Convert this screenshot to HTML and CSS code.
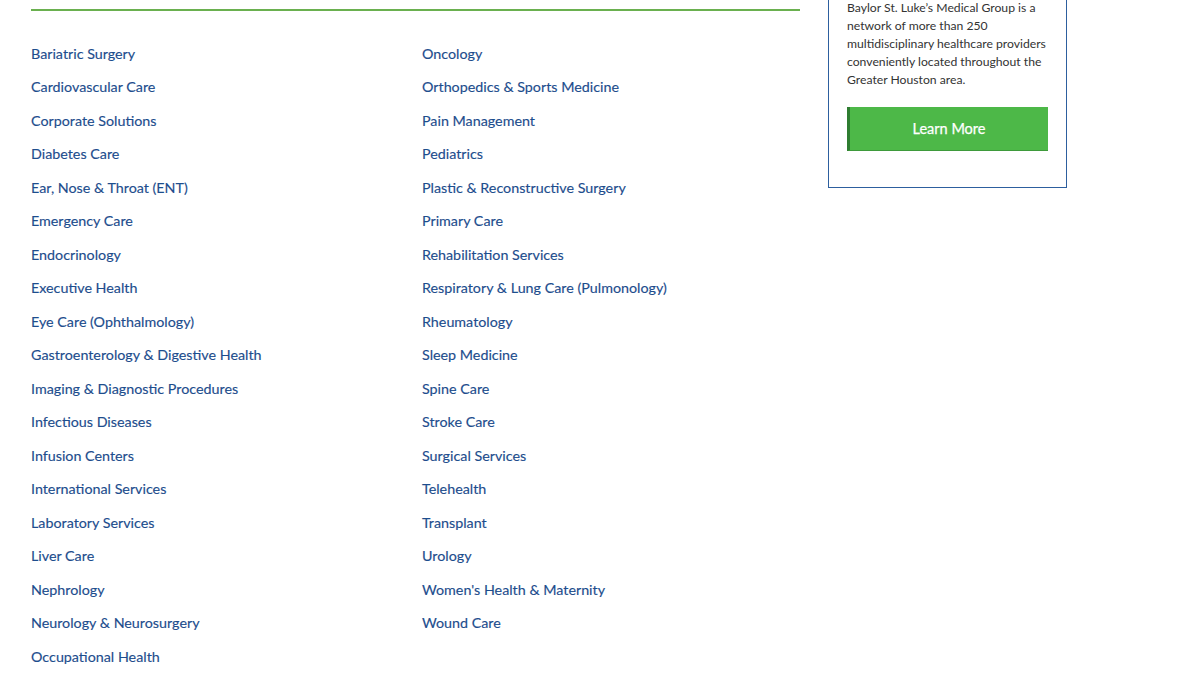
FILE: index.html
```html
<!DOCTYPE html>
<html>
<head>
<meta charset="utf-8">
<link rel="stylesheet" href="styles.css">
</head>
<body>
<div class="page">
  <main class="main">
    <ul class="links">
      <li><a href="#">Bariatric Surgery</a></li>
      <li><a href="#">Cardiovascular Care</a></li>
      <li><a href="#">Corporate Solutions</a></li>
      <li><a href="#">Diabetes Care</a></li>
      <li><a href="#">Ear, Nose &amp; Throat (ENT)</a></li>
      <li><a href="#">Emergency Care</a></li>
      <li><a href="#">Endocrinology</a></li>
      <li><a href="#">Executive Health</a></li>
      <li><a href="#">Eye Care (Ophthalmology)</a></li>
      <li><a href="#">Gastroenterology &amp; Digestive Health</a></li>
      <li><a href="#">Imaging &amp; Diagnostic Procedures</a></li>
      <li><a href="#">Infectious Diseases</a></li>
      <li><a href="#">Infusion Centers</a></li>
      <li><a href="#">International Services</a></li>
      <li><a href="#">Laboratory Services</a></li>
      <li><a href="#">Liver Care</a></li>
      <li><a href="#">Nephrology</a></li>
      <li><a href="#">Neurology &amp; Neurosurgery</a></li>
      <li><a href="#">Occupational Health</a></li>
    </ul>
    <ul class="links">
      <li><a href="#">Oncology</a></li>
      <li><a href="#">Orthopedics &amp; Sports Medicine</a></li>
      <li><a href="#">Pain Management</a></li>
      <li><a href="#">Pediatrics</a></li>
      <li><a href="#">Plastic &amp; Reconstructive Surgery</a></li>
      <li><a href="#">Primary Care</a></li>
      <li><a href="#">Rehabilitation Services</a></li>
      <li><a href="#">Respiratory &amp; Lung Care (Pulmonology)</a></li>
      <li><a href="#">Rheumatology</a></li>
      <li><a href="#">Sleep Medicine</a></li>
      <li><a href="#">Spine Care</a></li>
      <li><a href="#">Stroke Care</a></li>
      <li><a href="#">Surgical Services</a></li>
      <li><a href="#">Telehealth</a></li>
      <li><a href="#">Transplant</a></li>
      <li><a href="#">Urology</a></li>
      <li><a href="#">Women's Health &amp; Maternity</a></li>
      <li><a href="#">Wound Care</a></li>
    </ul>
  </main>
  <aside class="card">
    <p>Baylor St. Luke’s Medical Group is a network of more than 250 multidisciplinary healthcare providers conveniently located throughout the Greater Houston area.</p>
    <a class="btn" href="#">Learn More</a>
  </aside>
</div>
</body>
</html>
```
FILE: styles.css
```css
html, body {
  margin: 0;
  padding: 0;
  background: #fff;
}
body {
  font-family: Lato, "Open Sans", sans-serif;
  overflow: hidden;
}
.page {
  display: flex;
  align-items: flex-start;
  padding-left: 31px;
}
.main {
  width: 769px;
  margin-top: 9px;
  border-top: 2px solid #6ab04f;
  padding-top: 24.5px;
  display: grid;
  grid-template-columns: 391px 1fr;
}
.links {
  list-style: none;
  margin: 0;
  padding: 0;
}
.links li {
  height: 33.5px;
  line-height: 33.5px;
  white-space: nowrap;
}
.links a {
  color: #1d4d8d;
  text-decoration: none;
  font-size: 14.3px;
  -webkit-text-stroke: 0.15px #1d4d8d;
}
.card {
  margin-left: 28px;
  margin-top: -30px;
  width: 201px;
  border: 1px solid #2d5f9e;
  padding: 28px 18px 36px 18px;
}
.card p {
  margin: 0 0 18px 0;
  font-size: 12.2px;
  line-height: 18px;
  color: #333;
}
.btn {
  display: flex;
  align-items: center;
  justify-content: center;
  height: 44px;
  box-sizing: border-box;
  background: #4db848;
  border-left: 3px solid #2f7d31;
  border-bottom: 1px solid #3e9a3b;
  color: #fff;
  text-decoration: none;
  font-size: 14.5px;
  -webkit-text-stroke: 0.25px #fff;
}
```
